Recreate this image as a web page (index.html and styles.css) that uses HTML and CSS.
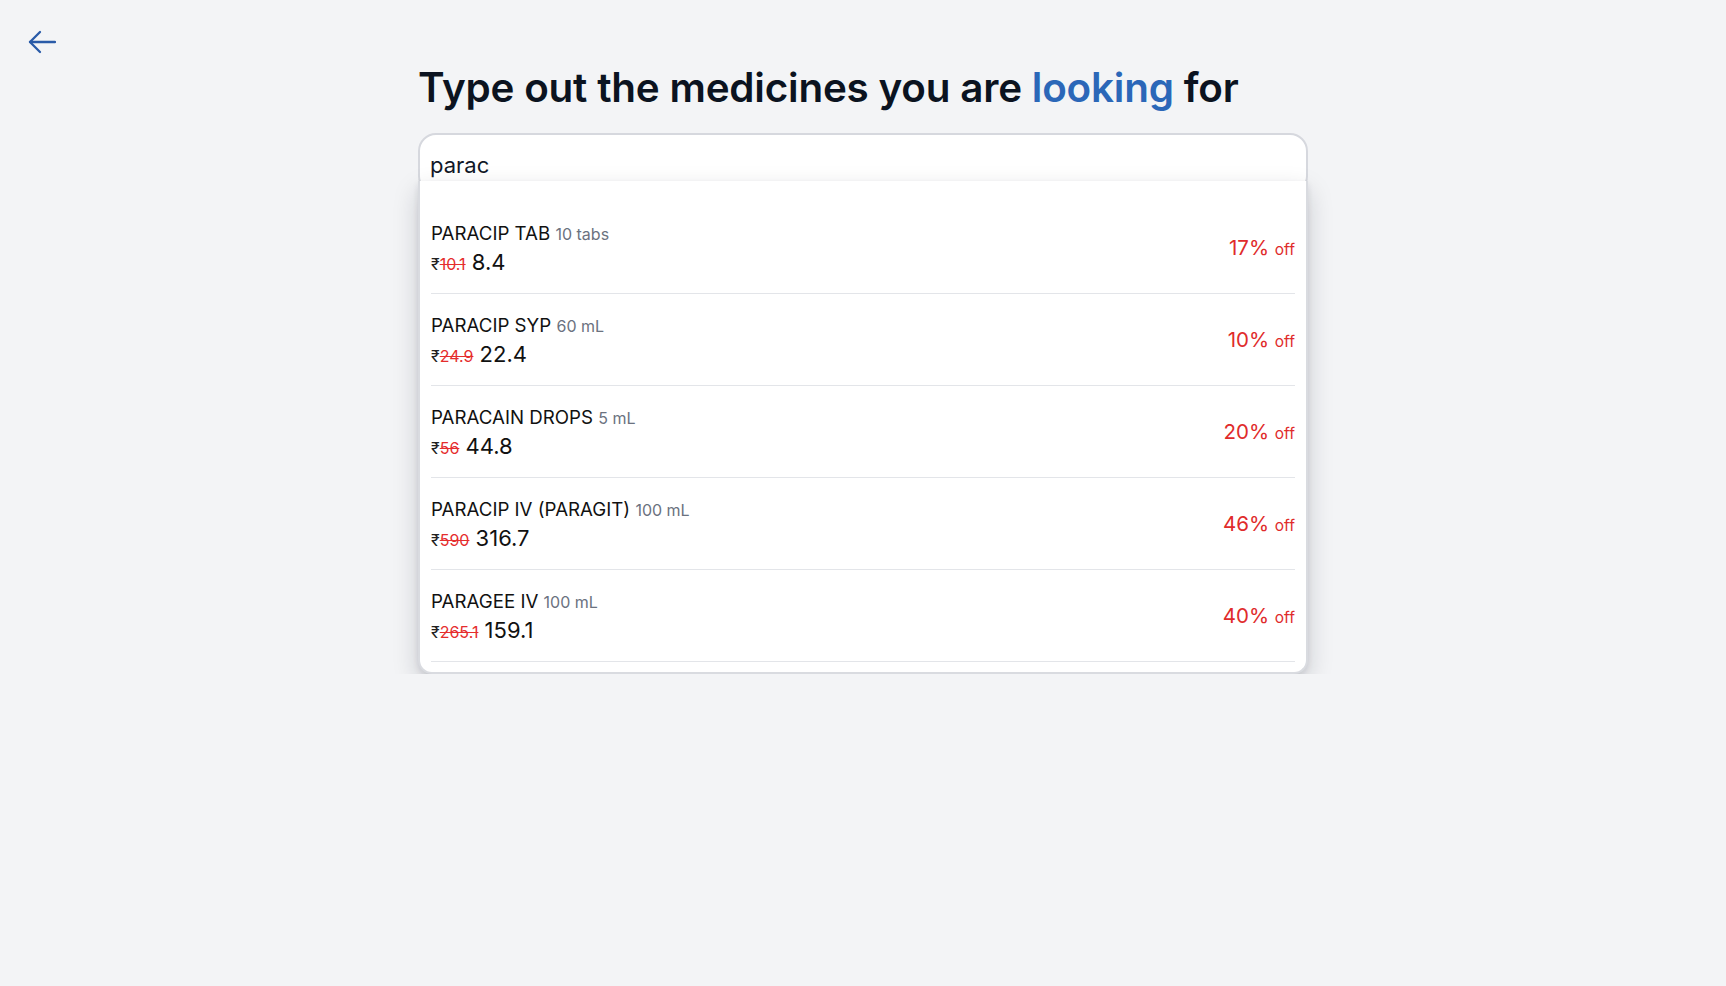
FILE: index.html
```html
<!DOCTYPE html>
<html lang="en">
<head>
<meta charset="utf-8">
<title>Search medicines</title>
<link rel="stylesheet" href="styles.css">
</head>
<body>
<header class="topbar">
  <button class="back" aria-label="Back">
    <svg width="28" height="24" viewBox="0 0 28 24" fill="none" stroke="#2a5ba8" stroke-width="2.3" stroke-linecap="round" stroke-linejoin="round">
      <path d="M27 12H2"/>
      <path d="M12 2L2 12l10 10"/>
    </svg>
  </button>
</header>
<main class="main">
  <h1 class="title">Type out the medicines you are <span class="accent">looking</span> for</h1>
  <div class="search">
    <div class="input-box">
      <input class="input" type="text" value="parac">
    </div>
    <div class="results">
      <div class="row">
        <div class="info">
          <div class="name">PARACIP TAB <span class="unit">10 tabs</span></div>
          <div class="price"><span class="mrp"><span class="rs">₹</span><s>10.1</s></span> 8.4</div>
        </div>
        <div class="disc">17% <span class="off">off</span></div>
      </div>
      <div class="row">
        <div class="info">
          <div class="name">PARACIP SYP <span class="unit">60 mL</span></div>
          <div class="price"><span class="mrp"><span class="rs">₹</span><s>24.9</s></span> 22.4</div>
        </div>
        <div class="disc">10% <span class="off">off</span></div>
      </div>
      <div class="row">
        <div class="info">
          <div class="name">PARACAIN DROPS <span class="unit">5 mL</span></div>
          <div class="price"><span class="mrp"><span class="rs">₹</span><s>56</s></span> 44.8</div>
        </div>
        <div class="disc">20% <span class="off">off</span></div>
      </div>
      <div class="row">
        <div class="info">
          <div class="name">PARACIP IV (PARAGIT) <span class="unit">100 mL</span></div>
          <div class="price"><span class="mrp"><span class="rs">₹</span><s>590</s></span> 316.7</div>
        </div>
        <div class="disc">46% <span class="off">off</span></div>
      </div>
      <div class="row">
        <div class="info">
          <div class="name">PARAGEE IV <span class="unit">100 mL</span></div>
          <div class="price"><span class="mrp"><span class="rs">₹</span><s>265.1</s></span> 159.1</div>
        </div>
        <div class="disc">40% <span class="off">off</span></div>
      </div>
    </div>
  </div>
</main>
</body>
</html>
```

FILE: styles.css
```css
* { box-sizing: border-box; }
html, body {
  margin: 0;
  padding: 0;
  background: #f3f4f6;
  font-family: Inter, "Noto Sans", "Liberation Sans", sans-serif;
  color: #0b1220;
}
.topbar {
  padding: 30px 0 0 28px;
  height: 54px;
}
.back {
  display: block;
  padding: 0;
  margin: 0;
  border: 0;
  background: none;
  line-height: 0;
  cursor: pointer;
}
.main {
  width: 890px;
  margin: 0 auto;
}
.title {
  margin: 10px 0 21px;
  font-size: 40.4px;
  line-height: 48px;
  font-weight: 600;
  letter-spacing: -0.2px;
  color: #0b1320;
}
.accent { color: #2b67b8; }
.search {
  display: flex;
  flex-direction: column;
}
.input-box {
  height: 61px;
  background: #fff;
  border: 2px solid #d6d8de;
  border-radius: 18px;
  display: flex;
  align-items: center;
  padding: 2px 10px 0;
}
.input {
  width: 100%;
  border: 0;
  outline: none;
  background: transparent;
  font-family: Inter, "Noto Sans", "Liberation Sans", sans-serif;
  font-size: 22px;
  color: #111827;
  padding: 0;
}
.results {
  position: relative;
  z-index: 1;
  margin-top: -13px;
  background: #fff;
  border: 2px solid #d9dbe0;
  border-top: 0;
  border-radius: 0 0 14px 14px;
  padding: 21px 11px 10px;
  box-shadow: 0 10px 26px rgba(17, 24, 39, 0.18), 0 3px 6px rgba(17, 24, 39, 0.09);
}
.row {
  height: 92px;
  border-bottom: 1px solid #e3e5e9;
  display: flex;
  align-items: center;
  justify-content: space-between;
}
.info {
  display: flex;
  flex-direction: column;
  gap: 2px;
  padding-top: 4px;
}
.name {
  font-size: 18.7px;
  line-height: 24px;
  color: #111;
}
.unit {
  font-size: 16px;
  color: #6b7280;
}
.price {
  font-size: 22px;
  line-height: 28px;
  color: #111;
}
.mrp {
  font-size: 16px;
}
.rs { color: #222; }
.mrp s {
  color: #e52d2d;
  text-decoration-color: #e52d2d;
}
.disc {
  font-size: 20.5px;
  color: #e02b2b;
}
.off {
  font-size: 15.5px;
}
```
